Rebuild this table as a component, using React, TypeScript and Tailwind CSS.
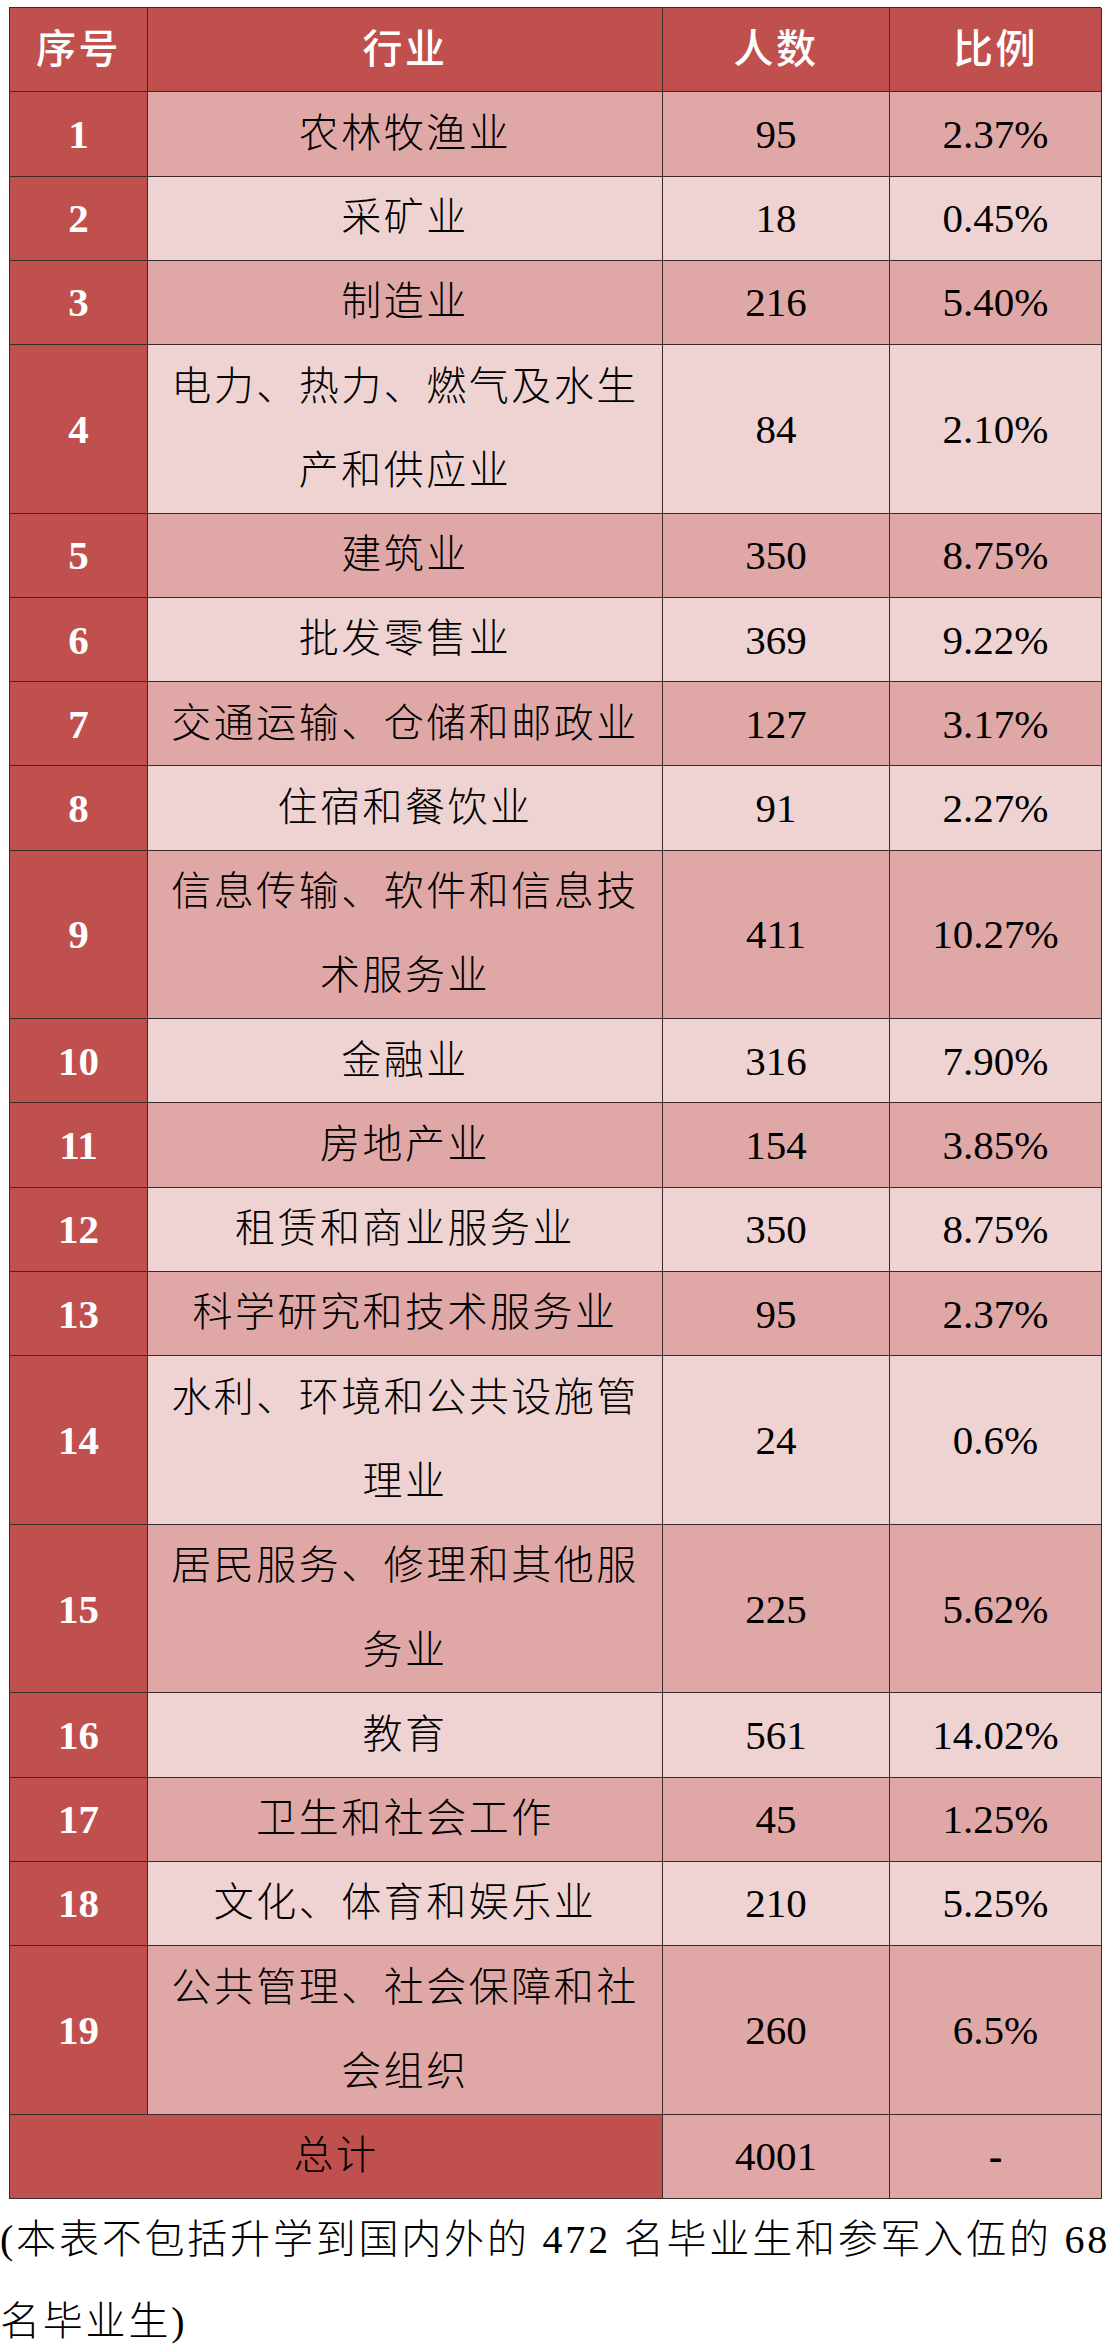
import React from "react";

type Row = { n: string; name: string[]; count: string; pct: string };

const rows: Row[] = [
  { n: "1", name: ["农林牧渔业"], count: "95", pct: "2.37%" },
  { n: "2", name: ["采矿业"], count: "18", pct: "0.45%" },
  { n: "3", name: ["制造业"], count: "216", pct: "5.40%" },
  { n: "4", name: ["电力、热力、燃气及水生", "产和供应业"], count: "84", pct: "2.10%" },
  { n: "5", name: ["建筑业"], count: "350", pct: "8.75%" },
  { n: "6", name: ["批发零售业"], count: "369", pct: "9.22%" },
  { n: "7", name: ["交通运输、仓储和邮政业"], count: "127", pct: "3.17%" },
  { n: "8", name: ["住宿和餐饮业"], count: "91", pct: "2.27%" },
  { n: "9", name: ["信息传输、软件和信息技", "术服务业"], count: "411", pct: "10.27%" },
  { n: "10", name: ["金融业"], count: "316", pct: "7.90%" },
  { n: "11", name: ["房地产业"], count: "154", pct: "3.85%" },
  { n: "12", name: ["租赁和商业服务业"], count: "350", pct: "8.75%" },
  { n: "13", name: ["科学研究和技术服务业"], count: "95", pct: "2.37%" },
  { n: "14", name: ["水利、环境和公共设施管", "理业"], count: "24", pct: "0.6%" },
  { n: "15", name: ["居民服务、修理和其他服", "务业"], count: "225", pct: "5.62%" },
  { n: "16", name: ["教育"], count: "561", pct: "14.02%" },
  { n: "17", name: ["卫生和社会工作"], count: "45", pct: "1.25%" },
  { n: "18", name: ["文化、体育和娱乐业"], count: "210", pct: "5.25%" },
  { n: "19", name: ["公共管理、社会保障和社", "会组织"], count: "260", pct: "6.5%" },
];

const FONT = { fontFamily: "'Liberation Serif', 'Noto Sans CJK SC', serif" };
const NUM = { fontFamily: "'Liberation Serif', serif" };

const cell =
  "flex items-center justify-center text-center border-r border-b border-[#3a2a2a]";

const head = `${cell} h-[84.27px] bg-[#C0504D] text-white text-[40px] leading-[84px] font-medium tracking-[2.5px]`;

export default function App() {
  return (
    <div className="bg-white w-[1112px] min-h-[2348px] text-black overflow-hidden" style={FONT}>
      <div className="pt-[7px] pl-[9px]">
        <div className="grid grid-cols-[138px_515px_227px_212px] w-[1092px] border-l border-t border-[#3a2a2a]">
          <div className={head}>序号</div>
          <div className={head}>行业</div>
          <div className={head}>人数</div>
          <div className={head}>比例</div>

          {rows.map((r, i) => {
            const dark = i % 2 === 0;
            const bg = dark ? "bg-[#DFA7A6]" : "bg-[#EFD3D2]";
            const h = r.name.length > 1 ? "h-[168.54px]" : "h-[84.27px]";
            return (
              <React.Fragment key={r.n}>
                <div
                  className={`${cell} ${h} bg-[#C0504D] text-white font-bold text-[41px] leading-[84px]`}
                  style={NUM}
                >
                  {r.n}
                </div>
                <div className={`${cell} ${h} ${bg} text-[40px] leading-[84.27px] tracking-[2.5px] font-light`}>
                  <div className="flex flex-col">
                    {r.name.map((l) => (
                      <span key={l}>{l}</span>
                    ))}
                  </div>
                </div>
                <div className={`${cell} ${h} ${bg} text-[41px] leading-[84px]`} style={NUM}>
                  {r.count}
                </div>
                <div className={`${cell} ${h} ${bg} text-[41px] leading-[84px]`} style={NUM}>
                  {r.pct}
                </div>
              </React.Fragment>
            );
          })}

          <div className={`${cell} col-span-2 h-[84.27px] bg-[#C0504D] text-[40px] leading-[84px] tracking-[2.5px] font-light`}>
            总计
          </div>
          <div className={`${cell} h-[84.27px] bg-[#DFA7A6] text-[41px] leading-[84px]`} style={NUM}>
            4001
          </div>
          <div className={`${cell} h-[84.27px] bg-[#DFA7A6] text-[41px] leading-[84px] font-bold`} style={NUM}>
            -
          </div>
        </div>
      </div>

      <div className="text-[40px] leading-[82px] tracking-[2.8px] font-light">
        <div className="whitespace-nowrap">
          (本表不包括升学到国内外的<span style={NUM}> 472 </span>名毕业生和参军入伍的<span style={NUM}> 68</span>
        </div>
        <div className="whitespace-nowrap">名毕业生)</div>
      </div>
    </div>
  );
}
